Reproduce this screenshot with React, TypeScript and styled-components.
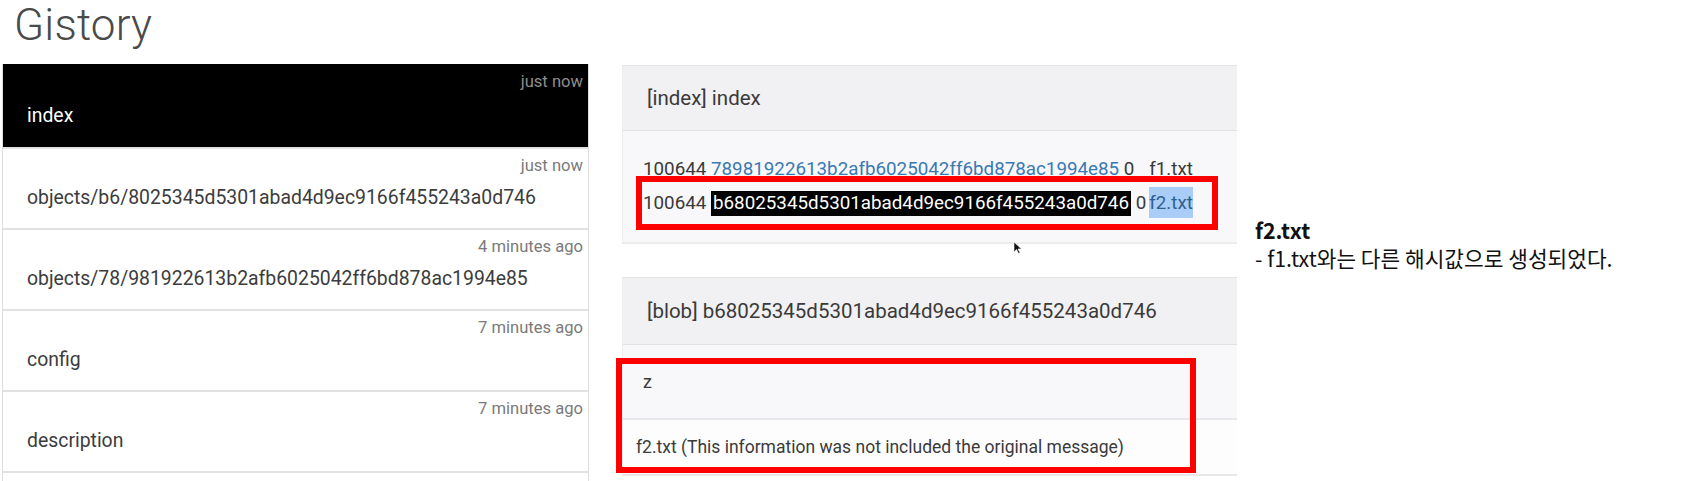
import React from "react";
import styled, { createGlobalStyle } from "styled-components";

const Global = createGlobalStyle`
  html, body { margin: 0; padding: 0; background: #ffffff; }
  body { width: 1707px; height: 481px; overflow: hidden; font-family: Roboto, "Noto Sans", sans-serif; }
`;

const Page = styled.div`
  display: flex;
  width: 1707px;
  height: 481px;
`;

const AppArea = styled.div`
  width: 1237px;
  flex: none;
  overflow: hidden;
  display: flex;
  flex-direction: column;
`;

const Title = styled.h1`
  flex: none;
  margin: 0;
  height: 64px;
  padding-left: 14px;
  font-family: Roboto, sans-serif;
  font-weight: 300;
  font-size: 44px;
  line-height: 50px;
  color: #4a4a4a;
  letter-spacing: 0.2px;
`;

const Columns = styled.div`
  flex: none;
  display: flex;
  align-items: flex-start;
`;

const List = styled.div`
  width: 585px;
  margin-left: 2px;
  padding-bottom: 30px;
  flex: none;
  display: flex;
  flex-direction: column;
  border-left: 1px solid #dedede;
  border-right: 1px solid #dedede;
`;

const Row = styled.div<{ $active?: boolean }>`
  height: ${(p) => (p.$active ? 76 : 73)}px;
  padding: ${(p) => (p.$active ? 7 : 6)}px 5px 0 24px;
  display: flex;
  flex-direction: column;
  background: ${(p) => (p.$active ? "#000000" : "#ffffff")};
  border-bottom: 2px solid #e2e2e2;
  box-sizing: content-box;
`;

const Time = styled.div<{ $active?: boolean }>`
  align-self: flex-end;
  font-size: 16.6px;
  line-height: 22px;
  color: ${(p) => (p.$active ? "#8e8e8e" : "#7a7a7a")};
`;

const Name = styled.div<{ $active?: boolean }>`
  margin-top: ${(p) => (p.$active ? 8 : 6)}px;
  font-size: 19.4px;
  line-height: 30px;
  color: ${(p) => (p.$active ? "#ffffff" : "#3c3c3c")};
`;

const Cards = styled.div`
  margin-left: 33px;
  width: 700px;
  flex: none;
  display: flex;
  flex-direction: column;
  gap: 33px;
  position: relative;
  padding-top: 1px;
`;

const Card = styled.div`
  position: relative;
  border-top: 1px solid #e3e3e3;
  border-left: 1px solid #ececec;
`;

const CardHeader = styled.div<{ $h: number }>`
  height: ${(p) => p.$h}px;
  display: flex;
  align-items: center;
  padding-left: 24px;
  background: #f1f0f3;
  border-bottom: 1px solid #e2e2e4;
  font-size: 20.5px;
  color: #3a3a3a;
`;

const IndexBody = styled.div`
  padding: 21px 0 22px 20px;
  background: #f8f7fa;
  display: grid;
  grid-template-columns: max-content max-content;
  column-gap: 3px;
  font-size: 18.8px;
  line-height: 34px;
  color: #3a3a3a;
  border-bottom: 2px solid #ececec;
`;

const Entry = styled.div``;

const Hash = styled.span<{ $selected?: boolean }>`
  color: ${(p) => (p.$selected ? "#ffffff" : "#3a7ab3")};
  background: ${(p) => (p.$selected ? "#000000" : "transparent")};
  padding: ${(p) => (p.$selected ? "1px 2px 2px" : "0")};
`;

const FileName = styled.span<{ $selected?: boolean }>`
  background: ${(p) => (p.$selected ? "#a9cdf6" : "transparent")};
  color: ${(p) => (p.$selected ? "#2f5f8f" : "#3a3a3a")};
  padding: 5px 0 4px;
`;

const BodyRow = styled.div<{ $h: number; $bg: string; $indent: number; $size: number }>`
  height: ${(p) => p.$h}px;
  display: flex;
  align-items: center;
  padding-left: ${(p) => p.$indent}px;
  background: ${(p) => p.$bg};
  border-bottom: 2px solid #e8e8ea;
  font-size: ${(p) => p.$size}px;
  color: #3a3a3a;
`;

const RedBox = styled.div<{ $l: number; $t: number; $w: number; $h: number }>`
  position: absolute;
  left: ${(p) => p.$l}px;
  top: ${(p) => p.$t}px;
  width: ${(p) => p.$w}px;
  height: ${(p) => p.$h}px;
  box-sizing: border-box;
  border: 6px solid #ff0000;
  pointer-events: none;
`;

const Cursor = styled.svg`
  position: absolute;
  left: 392px;
  top: 178px;
`;

const Note = styled.div`
  padding: 216px 0 0 18px;
  font-family: "Noto Sans CJK KR", "Noto Sans", sans-serif;
  font-size: 21.4px;
  line-height: 28px;
  color: #111111;
`;

const NoteTitle = styled.div`
  font-weight: 700;
`;

const NoteLine = styled.div`
  font-weight: 400;
`;

const rows = [
  { name: "index", time: "just now", active: true },
  { name: "objects/b6/8025345d5301abad4d9ec9166f455243a0d746", time: "just now" },
  { name: "objects/78/981922613b2afb6025042ff6bd878ac1994e85", time: "4 minutes ago" },
  { name: "config", time: "7 minutes ago" },
  { name: "description", time: "7 minutes ago" },
];

export default function App() {
  return (
    <>
      <Global />
      <Page>
        <AppArea>
          <Title>Gistory</Title>
          <Columns>
            <List>
              {rows.map((r) => (
                <Row key={r.name} $active={r.active}>
                  <Time $active={r.active}>{r.time}</Time>
                  <Name $active={r.active}>{r.name}</Name>
                </Row>
              ))}
            </List>
            <Cards>
              <Card>
                <CardHeader $h={64}>[index] index</CardHeader>
                <IndexBody>
                  <Entry>
                    100644 <Hash>78981922613b2afb6025042ff6bd878ac1994e85</Hash> 0
                  </Entry>
                  <Entry>
                    <FileName>f1.txt</FileName>
                  </Entry>
                  <Entry>
                    100644 <Hash $selected>b68025345d5301abad4d9ec9166f455243a0d746</Hash> 0
                  </Entry>
                  <Entry>
                    <FileName $selected>f2.txt</FileName>
                  </Entry>
                </IndexBody>
                <RedBox $l={13} $t={110} $w={582} $h={54} />
              </Card>
              <Card>
                <CardHeader $h={66}>[blob] b68025345d5301abad4d9ec9166f455243a0d746</CardHeader>
                <BodyRow $h={73} $bg="#f8f7fa" $indent={20} $size={18}>z</BodyRow>
                <BodyRow $h={54} $bg="#fdfdfe" $indent={13} $size={17.5}>
                  f2.txt (This information was not included the original message)
                </BodyRow>
                <RedBox $l={-7} $t={80} $w={580} $h={115} />
              </Card>
              <Cursor width="8" height="12" viewBox="0 0 8 12">
                <path d="M0 0 L0 10 L2.5 7.5 L4.5 11.5 L6 10.8 L4 7 L7.5 7 Z" fill="#111" stroke="#fff" strokeWidth="0.6" />
              </Cursor>
            </Cards>
          </Columns>
        </AppArea>
        <Note>
          <NoteTitle>f2.txt</NoteTitle>
          <NoteLine>- f1.txt와는 다른 해시값으로 생성되었다.</NoteLine>
        </Note>
      </Page>
    </>
  );
}
